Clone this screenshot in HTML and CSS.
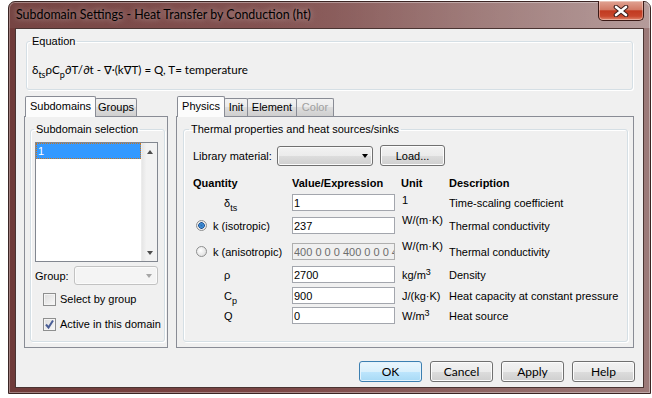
FILE: index.html
```html
<!DOCTYPE html>
<html lang="en">
  <head>
    <meta charset="UTF-8" />
    <meta name="viewport" content="width=device-width, initial-scale=1.0" />
    <title>Subdomain Settings</title>
    <link rel="stylesheet" href="styles.css">
  </head>
  <body>
    <div class="window">
      <div class="titlebar">
        <span class="title">Subdomain Settings - Heat Transfer by Conduction (ht)</span>
        <div class="close">
          <svg width="16" height="12" viewBox="0 0 16 12">
            <path d="M3 2 L13 10 M13 2 L3 10" stroke="#3a1e1c" stroke-width="4.6" stroke-linecap="round" fill="none" />
            <path d="M3 2 L13 10 M13 2 L3 10" stroke="#ffffff" stroke-width="2.6" stroke-linecap="round" fill="none" />
          </svg>
        </div>
      </div>

      <div class="client">
        <fieldset class="group eq">
          <legend>Equation</legend>
          <div class="equation">δ<sub>ts</sub>ρC<sub>p</sub>∂T/∂t - ∇·(k∇T) = Q, T= temperature</div>
        </fieldset>

        <div class="panes">
          <div class="tabpane left">
            <div class="tabstrip">
              <span class="tab active w-sub">Subdomains</span>
              <span class="tab w-groups">Groups</span>
            </div>
            <div class="tabbody">
              <fieldset class="group sel">
                <legend>Subdomain selection</legend>
                <div class="listbox">
                  <div class="items">
                    <div class="item selected">1</div>
                  </div>
                  <div class="vscroll">
                    <span class="sbtn"><span class="arrow up"></span></span>
                    <span class="sbtn"><span class="arrow down"></span></span>
                  </div>
                </div>
                <div class="grouprow">
                  <span>Group:</span>
                  <div class="combo disabled"><span class="caret"></span></div>
                </div>
                <label class="check first"><span class="box"></span>Select by group</label>
                <label class="check"><span class="box">
                  <svg width="11" height="11" viewBox="0 0 11 11">
                    <path d="M2 5.5 L4.5 8.5 L9 1.5" stroke="#4a5e96" stroke-width="2" fill="none" />
                  </svg>
                </span>Active in this domain</label>
              </fieldset>
            </div>
          </div>

          <div class="tabpane right">
            <div class="tabstrip">
              <span class="tab active w-phys">Physics</span>
              <span class="tab w-init">Init</span>
              <span class="tab w-elem">Element</span>
              <span class="tab off w-color">Color</span>
            </div>
            <div class="tabbody">
              <fieldset class="group thermal">
                <legend>Thermal properties and heat sources/sinks</legend>
                <div class="librow">
                  <span class="liblabel">Library material:</span>
                  <div class="combo lib"><span class="caret"></span></div>
                  <button class="btn load">Load...</button>
                </div>

                <div class="props">
                  <div class="head">Quantity</div>
                  <div class="head">Value/Expression</div>
                  <div class="head">Unit</div>
                  <div class="head">Description</div>

                  <div class="cell sym"><span>δ<sub>ts</sub></span></div>
                  <input class="field" value="1">
                  <div class="cell unit top">1</div>
                  <div class="cell">Time-scaling coefficient</div>

                  <div class="cell"><span class="radio on"></span>k (isotropic)</div>
                  <input class="field" value="237">
                  <div class="cell unit top raise">W/(m·K)</div>
                  <div class="cell">Thermal conductivity</div>

                  <div class="cell"><span class="radio"></span>k (anisotropic)</div>
                  <input class="field" value="400 0 0 0 400 0 0 0 400" disabled>
                  <div class="cell unit top raise">W/(m·K)</div>
                  <div class="cell">Thermal conductivity</div>

                  <div class="cell sym"><span>ρ</span></div>
                  <input class="field" value="2700">
                  <div class="cell unit"><span>kg/m<sup>3</sup></span></div>
                  <div class="cell">Density</div>

                  <div class="cell sym"><span>C<sub>p</sub></span></div>
                  <input class="field" value="900">
                  <div class="cell unit">J/(kg·K)</div>
                  <div class="cell">Heat capacity at constant pressure</div>

                  <div class="cell sym"><span>Q</span></div>
                  <input class="field" value="0">
                  <div class="cell unit"><span>W/m<sup>3</sup></span></div>
                  <div class="cell">Heat source</div>
                </div>
              </fieldset>
            </div>
          </div>
        </div>

        <div class="buttons">
          <button class="btn default">OK</button>
          <button class="btn">Cancel</button>
          <button class="btn">Apply</button>
          <button class="btn">Help</button>
        </div>
      </div>
    </div>
  </body>
</html>
```

FILE: styles.css
```css
* {
  box-sizing: border-box;
}
body {
  margin: 0;
  width: 652px;
  height: 398px;
  overflow: hidden;
  background: #fff;
  font-family: "Liberation Sans", Arial, sans-serif;
  font-size: 11px;
  color: #000;
}
.window {
  margin: 1px 0 0 8px;
  width: 643px;
  height: 393px;
  border: 1px solid #3b2524;
  border-radius: 7px 7px 0 0;
  padding: 0 6px 5px;
  background: linear-gradient(to right, #6f3b39, #7a4544 40%, #8f6664 75%, #9c7a79);
  box-shadow: inset 0 0 0 1px rgba(255, 255, 255, 0.35);
  display: flex;
  flex-direction: column;
}
.titlebar {
  height: 26px;
  display: flex;
  justify-content: space-between;
  align-items: flex-start;
  background: linear-gradient(to right, rgba(255, 255, 255, 0.05), rgba(255, 255, 255, 0.08) 50%, rgba(255, 255, 255, 0.25));
  margin: 0 -6px;
  padding: 0 6px;
}
.title {
  font-family: Lato, "Liberation Sans", sans-serif;
  font-size: 12.4px;
  line-height: 16px;
  margin: 5px 0 0 1px;
  text-shadow: 0 0 6px rgba(255, 255, 255, 0.6);
}
.close {
  width: 46px;
  height: 20px;
  margin-top: -1px;
  border: 1px solid #3b1a16;
  border-top: none;
  border-radius: 0 0 5px 5px;
  background: linear-gradient(#e0a393, #d27a66 45%, #c13a20 52%, #c8472d 80%, #e0866c);
  box-shadow: inset 0 0 0 1px rgba(255, 255, 255, 0.35);
  display: flex;
  align-items: center;
  justify-content: center;
}
.client {
  height: 360px;
  border: 1px solid #4a3432;
  background: #f0f0f0;
  padding: 6px 9px 0 8px;
}

/* group boxes */
fieldset.group {
  margin: 0;
  padding: 0;
  min-width: 0;
  border: 1px solid #d5dfe5;
  border-radius: 3px;
  box-shadow: inset 1px 1px 0 #fff, 1px 1px 0 #fff;
}
legend {
  padding: 0 2px;
  margin-left: 3px;
  line-height: 13px;
}
.eq {
  margin: 0 1px 0 2px !important;
}
.equation {
  font-family: Lato, "DejaVu Sans", sans-serif;
  font-size: 11.6px;
  line-height: 16px;
  padding: 14px 0 11px 5px;
}
.equation sub {
  font-size: 9px;
  vertical-align: -4px;
  line-height: 0;
}

/* tabs */
.panes {
  display: flex;
  gap: 8px;
  margin-top: 6px;
}
.tabpane.left {
  width: 144px;
}
.tabpane.right {
  width: 458px;
}
.tabstrip {
  display: flex;
  align-items: flex-end;
  height: 20px;
  padding-left: 1px;
}
.tab {
  height: 18px;
  line-height: 17px;
  margin-right: -1px;
  border: 1px solid #898c95;
  border-bottom: none;
  border-radius: 2px 2px 0 0;
  text-align: center;
  white-space: nowrap;
  background: linear-gradient(#f2f2f2, #ebebeb 50%, #dddddd 50%, #cfcfcf);
}
.tab.active {
  height: 21px;
  line-height: 19px;
  margin-bottom: -1px;
  background: #fcfcfc;
  position: relative;
  z-index: 1;
}
.tab.off {
  color: #a0a0a0;
}
.w-sub { width: 71px; }
.w-groups { width: 42px; }
.w-phys { width: 48px; }
.w-init { width: 24px; }
.w-elem { width: 50px; }
.w-color { width: 38px; }
.tabbody {
  height: 232px;
  border: 1px solid #898c95;
  background: #f0f0f0;
  display: flex;
  flex-direction: column;
}
.left .tabbody {
  padding: 6px 2px 5px 5px;
}
.right .tabbody {
  padding: 6px 5px 5px 6px;
}
.tabbody fieldset.group {
  flex: 1;
}

/* subdomain list */
.sel {
  padding: 0 0 0 4px !important;
}
.sel legend {
  margin-left: -1px;
}
.listbox {
  width: 123px;
  height: 120px;
  margin-top: 6px;
  border: 1px solid #828790;
  background: #fff;
  display: flex;
}
.items {
  flex: 1;
}
.item {
  height: 16px;
  line-height: 14px;
  padding-left: 1px;
}
.item.selected {
  background: #3399ff;
  color: #fff;
  border: 1px dotted #c8741e;
}
.vscroll {
  width: 16px;
  background: linear-gradient(to right, #e6e6e6, #f2f2f2 30%, #f2f2f2);
  border-left: 1px solid #ececec;
  display: flex;
  flex-direction: column;
  justify-content: space-between;
}
.sbtn {
  height: 17px;
  display: flex;
  align-items: center;
  justify-content: center;
}
.arrow {
  width: 0;
  height: 0;
  border-left: 3.5px solid transparent;
  border-right: 3.5px solid transparent;
}
.arrow.up {
  border-bottom: 4px solid #4d4d4d;
}
.arrow.down {
  border-top: 4px solid #4d4d4d;
}
.grouprow {
  width: 123px;
  margin-top: 4px;
  display: flex;
  align-items: center;
  justify-content: space-between;
}
.combo {
  height: 19px;
  border: 1px solid #707070;
  border-radius: 3px;
  display: flex;
  align-items: center;
  justify-content: flex-end;
  padding-right: 4px;
  background: linear-gradient(#f2f2f2, #ebebeb 50%, #dddddd 50%, #cfcfcf);
  box-shadow: inset 0 0 0 1px #fbfbfb;
}
.combo.disabled {
  width: 84px;
  border-color: #c2c2c2;
  background: #f4f4f4;
  padding-right: 5px;
}
.caret {
  width: 0;
  height: 0;
  border-left: 3.5px solid transparent;
  border-right: 3.5px solid transparent;
  border-top: 4px solid #000;
}
.disabled .caret {
  border-top-color: #a6a6a6;
}
.check {
  display: flex;
  align-items: center;
  gap: 4px;
  margin: 12px 0 0 8px;
  line-height: 13px;
}
.check.first {
  margin-top: 8px;
}
.box {
  width: 13px;
  height: 13px;
  border: 1px solid #8e8f8f;
  background: linear-gradient(135deg, #dcdcdc, #f8f8f8);
  box-shadow: inset 0 0 0 1px #f4f4f4;
  display: flex;
  align-items: center;
  justify-content: center;
}

/* physics panel */
.thermal {
  padding: 0 0 0 9px !important;
}
.thermal legend {
  margin-left: -4px;
}
.librow {
  display: flex;
  align-items: center;
  margin-top: 9px;
}
.liblabel {
  width: 84px;
}
.combo.lib {
  width: 96px;
  height: 20px;
  padding-right: 4px;
}
.btn {
  height: 21px;
  width: 63px;
  padding: 0;
  border: 1px solid #707070;
  border-radius: 3px;
  font-family: Lato, "Liberation Sans", sans-serif;
  font-size: 12px;
  color: #000;
  background: linear-gradient(#f2f2f2, #ebebeb 50%, #dddddd 50%, #cfcfcf);
  box-shadow: inset 0 0 0 1px #fcfcfc;
}
.btn.load {
  width: 65px;
  margin-left: 7px;
  font-family: "Liberation Sans", Arial, sans-serif;
  font-size: 11px;
}
.btn.default {
  border-color: #3c7fb1;
  background: linear-gradient(#eaf6fd, #d9f0fc 50%, #bee6fd 50%, #a7d9f5);
  box-shadow: inset 0 0 0 1px #e4f3fc;
}
.props {
  display: grid;
  grid-template-columns: 99px 109px 48px 1fr;
  grid-template-rows: 17px 23px 26px 23px 21px 20px 20px;
  margin-top: 11px;
}
.head {
  font-weight: bold;
  line-height: 13px;
}
.cell {
  height: 17px;
  display: flex;
  align-items: center;
  white-space: nowrap;
}
.sym {
  padding-left: 31px;
}
.sym sub {
  font-size: 9px;
  vertical-align: -4px;
  line-height: 0;
}
.unit {
  padding-left: 1px;
}
.unit sup {
  font-size: 9px;
  vertical-align: 4px;
  line-height: 0;
}
.unit.top {
  align-items: flex-start;
  line-height: 13px;
}
.unit.raise {
  margin-top: -3px;
}
.field {
  width: 103px;
  height: 17px;
  margin: 0;
  padding: 0 0 0 1px;
  border: 1px solid #a3a6ad;
  background: #fff;
  font-family: "Liberation Sans", Arial, sans-serif;
  font-size: 11px;
  color: #000;
  outline: none;
}
.field:disabled {
  background: #f0f0f0;
  color: #6d6d6d;
  border-color: #afafaf;
}
.radio {
  width: 11px;
  height: 11px;
  margin: 0 6px 0 3px;
  border: 1px solid #8e8f8f;
  border-radius: 50%;
  background: radial-gradient(circle at 40% 40%, #fff, #d6d6d6);
}
.radio.on {
  background: radial-gradient(circle, #2c6fb4 0, #3f8fd8 2px, #1c4f90 3px, #e8e8e8 3.5px, #f8f8f8);
}

/* dialog buttons */
.buttons {
  display: flex;
  justify-content: flex-end;
  gap: 8px;
  margin: 13px -1px 0 0;
}
```
